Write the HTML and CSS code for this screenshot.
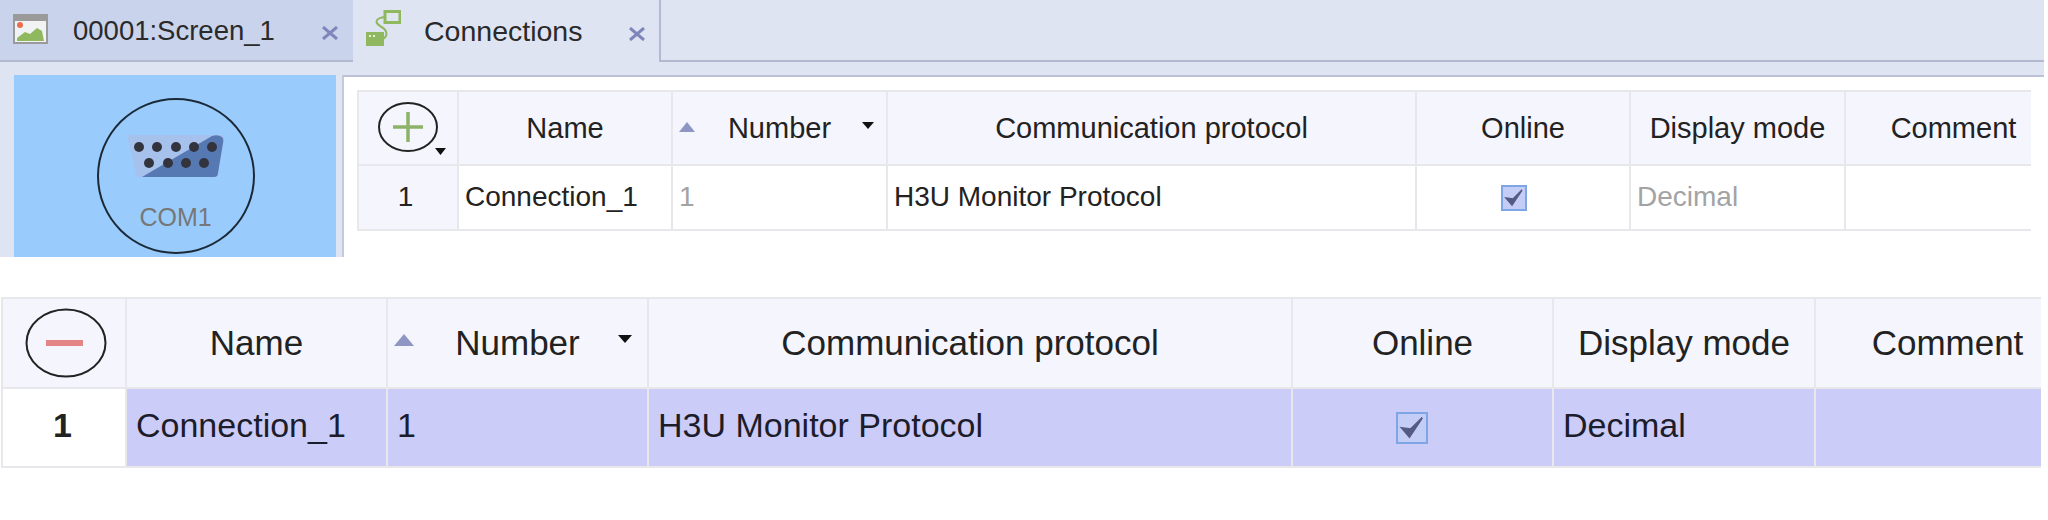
FILE: index.html
```html
<!DOCTYPE html>
<html lang="en">
<head>
<meta charset="utf-8">
<title>Connections</title>
<link rel="stylesheet" href="styles.css">
</head>
<body>
<section class="editor">
  <div class="tabbar">
    <div class="tab tab-inactive">
      <svg class="tab-icon" width="35" height="30" viewBox="0 0 35 30"><rect x="1" y="1" width="33" height="28" fill="#f1f2f4" stroke="#9a9a9a" stroke-width="2"/><rect x="1" y="1" width="33" height="6" fill="#9a9a9a"/><circle cx="7" cy="11" r="3" fill="#ee6b4d"/><path d="M4 27 L4 24 L12 18 L17 20 L24 14 L29 17 L31 27Z" fill="#8fb85f"/></svg>
      <span class="tab-label tab-label-screen">00001:Screen_1</span>
      <span class="tab-close"><svg width="16" height="14" viewBox="0 0 16 14"><path d="M1 1 L15 13 M15 1 L1 13" stroke="#7f86bb" stroke-width="3" fill="none"/></svg></span>
    </div>
    <div class="tab tab-active">
      <svg class="tab-icon" width="35" height="36" viewBox="0 0 35 36"><rect x="19" y="1.5" width="15" height="11" fill="#dfe6f0" stroke="#8fb85f" stroke-width="3"/><path d="M19 7 C10 8 8 12 14 16 C22 20 22 26 17 29" stroke="#8fb85f" stroke-width="2" fill="none"/><rect x="0" y="22" width="18" height="14" fill="#8fb85f"/><rect x="3" y="25" width="2" height="2" fill="#e6efd8"/><rect x="7" y="25" width="2" height="2" fill="#e6efd8"/></svg>
      <span class="tab-label tab-label-conn">Connections</span>
      <span class="tab-close"><svg width="16" height="14" viewBox="0 0 16 14"><path d="M1 1 L15 13 M15 1 L1 13" stroke="#7f86bb" stroke-width="3" fill="none"/></svg></span>
    </div>
    <div class="tab-rest"></div>
  </div>
  <div class="workspace">
    <div class="node-panel">
      <div class="com-node">
        <svg class="connector" width="96" height="42" viewBox="0 0 96 42">
          <path d="M3 0 H93 Q96 0 96 4 L90 38 Q90 42 86 42 H12 Q9 42 8 38 L0 4 Q0 0 3 0Z" fill="#a6c1ec"/>
          <path d="M14 42 L84 1 Q90 -1 94 2 Q96 4 95 8 L90 38 Q90 42 86 42Z" fill="#5679b4"/>
          <g fill="#33333d"><circle cx="11" cy="12" r="5"/><circle cx="29" cy="12" r="5"/><circle cx="48" cy="12" r="5"/><circle cx="66" cy="12" r="5"/><circle cx="84" cy="12" r="5"/><circle cx="21" cy="28" r="5"/><circle cx="40" cy="28" r="5"/><circle cx="58" cy="28" r="5"/><circle cx="76" cy="28" r="5"/></g>
        </svg>
        <span class="com-label">COM1</span>
      </div>
    </div>
    <div class="grid-panel">
      <table class="grid grid-small">
        <colgroup><col class="s1"><col class="s2"><col class="s3"><col class="s4"><col class="s5"><col class="s6"><col class="s7"></colgroup>
        <thead>
          <tr>
            <th class="corner">
              <svg class="add-icon" width="70" height="53" viewBox="0 0 70 53"><ellipse cx="30" cy="25" rx="29" ry="24" fill="none" stroke="#222" stroke-width="2"/><path d="M15 25 H45 M30 10 V40" stroke="#8cb368" stroke-width="3.500" fill="none"/><path d="M57 46 H68 L62.500 53Z" fill="#111"/></svg>
            </th>
            <th>Name</th>
            <th class="sortable">
              <span class="sort-up"></span>Number<span class="sort-down"></span>
            </th>
            <th>Communication protocol</th>
            <th>Online</th>
            <th>Display mode</th>
            <th class="comment">Comment</th>
          </tr>
        </thead>
        <tbody>
          <tr>
            <td class="rownum">1</td>
            <td>Connection_1</td>
            <td class="muted">1</td>
            <td>H3U Monitor Protocol</td>
            <td class="check-cell"><span class="check"><svg width="22" height="22" viewBox="0 0 22 22"><path d="M3 11 L9 18 L19 3 L10 12Z" fill="#555a85" stroke="#555a85" stroke-width="1.500"/></svg></span></td>
            <td class="muted">Decimal</td>
            <td></td>
          </tr>
        </tbody>
      </table>
    </div>
  </div>
</section>
<section class="lower">
  <table class="grid grid-large">
    <colgroup><col class="l1"><col class="l2"><col class="l3"><col class="l4"><col class="l5"><col class="l6"><col class="l7"></colgroup>
    <thead>
      <tr>
        <th class="corner">
          <svg class="remove-icon" width="82" height="70" viewBox="0 0 82 70"><ellipse cx="41" cy="35" rx="39.500" ry="33.500" fill="none" stroke="#222" stroke-width="2"/><rect x="21" y="32" width="37" height="6" fill="#e48585"/></svg>
        </th>
        <th>Name</th>
        <th class="sortable">
          <span class="sort-up"></span>Number<span class="sort-down"></span>
        </th>
        <th>Communication protocol</th>
        <th>Online</th>
        <th>Display mode</th>
        <th class="comment">Comment</th>
      </tr>
    </thead>
    <tbody>
      <tr class="selected">
        <td class="rownum">1</td>
        <td>Connection_1</td>
        <td>1</td>
        <td>H3U Monitor Protocol</td>
        <td class="check-cell"><span class="check"><svg width="28" height="28" viewBox="0 0 22 22"><path d="M3 11 L9 18 L19 3 L10 12Z" fill="#555a85" stroke="#555a85" stroke-width="1.500"/></svg></span></td>
        <td>Decimal</td>
        <td></td>
      </tr>
    </tbody>
  </table>
</section>
</body>
</html>
```

FILE: styles.css
```css
* { box-sizing: border-box; }
html, body { margin: 0; padding: 0; background: #fff; }
body { width: 2048px; height: 520px; overflow: hidden; font-family: "Liberation Sans", Arial, sans-serif; color: #222; }

.editor { width: 2044px; }

.tabbar { display: flex; height: 62px; background: #dee4f1; }
.tab { display: flex; align-items: center; height: 62px; padding-left: 13px; }
.tab-inactive { width: 353px; background: #c9d3ec; border-bottom: 2px solid #b3b9d0; }
.tab-active { width: 306px; background: #dee4f1; }
.tab-rest { flex: 1; border-left: 2px solid #b3b9d0; border-bottom: 2px solid #b3b9d0; }
.tab-icon { flex: none; display: block; }
.tab-label { color: #2a2a2a; white-space: nowrap; padding-top: 1px; }
.tab-label-screen { margin-left: 25px; font-size: 27.500px; }
.tab-label-conn { margin-left: 23px; font-size: 28.500px; }
.tab-close { margin-left: auto; margin-right: 15px; padding-top: 5px; line-height: 0; }
.tab-inactive .tab-icon { margin-top: -3px; }
.tab-active .tab-icon { margin-top: -6px; }
.tab-active .tab-close { margin-right: 14px; }

.workspace { display: flex; height: 195px; background: #dee4f1; padding-top: 13px; }

.node-panel { width: 322px; margin-left: 14px; background: #99ccfd; display: flex; justify-content: center; padding-top: 23px; }
.com-node { width: 158px; height: 156px; flex: none; border: 2px solid #1c2a38; border-radius: 50%; display: flex; flex-direction: column; align-items: center; padding-top: 35px; margin-left: 1px; }
.connector { display: block; flex: none; }
.com-label { font-size: 25px; line-height: 30px; color: #777; margin-top: 25px; }

.grid-panel { flex: 1; margin-left: 6px; background: #fff; border-left: 2px solid #c5c9da; border-top: 2px solid #bcc1d6; padding: 13px 0 0 13px; }

.grid { border-collapse: separate; border-spacing: 0; table-layout: fixed; border-top: 2px solid #e8e8ec; border-left: 2px solid #e8e8ec; }
.grid th, .grid td { padding: 0; border-right: 2px solid #e8e8ec; border-bottom: 2px solid #e8e8ec; font-weight: normal; white-space: nowrap; overflow: hidden; }
.grid th { background: #f4f5fd; text-align: center; }
.grid th:last-child, .grid td:last-child { border-right: 0; }
.grid td { text-align: left; }
.grid .corner, .grid .rownum, .grid .check-cell { text-align: center; }
.grid .rownum { background: #f4f5fd; }
.grid .muted { color: #a3a3a3; }
.sortable { position: relative; }
.sort-up, .sort-down { position: absolute; width: 0; height: 0; border-style: solid; border-color: transparent; }

.grid-small { width: 1674px; font-size: 28px; }
.grid-small th { font-size: 29px; height: 74px; }
.grid-small td { height: 65px; padding-left: 6px; padding-bottom: 2px; }
.grid-small td.rownum, .grid-small td.check-cell { padding-left: 0; }
.grid-small td.rownum { padding-right: 5px; }
.grid-small .comment { padding-left: 30px; }
.grid-small .sort-up { left: 6px; top: 30px; border-width: 0 8px 10px; border-bottom-color: #8e96c4; }
.grid-small .sort-down { left: 189px; top: 30px; border-width: 7px 6px 0; border-top-color: #111; }
.s1 { width: 100px; } .s2 { width: 214px; } .s3 { width: 215px; } .s4 { width: 529px; } .s5 { width: 214px; } .s6 { width: 215px; } .s7 { width: 185px; }
.add-icon { display: block; margin: 0 0 0 19px; }

.lower { margin-top: 40px; padding-left: 1px; }
.grid-large { width: 2040px; font-size: 34px; }
.grid-large th { font-size: 35px; height: 90px; }
.grid-large td { height: 79px; padding-left: 9px; padding-bottom: 4px; }
.grid-large td.rownum, .grid-large td.check-cell { padding-left: 0; }
.grid-large .rownum { background: #fff; font-weight: bold; padding-right: 3px; }
.grid-large .comment { padding-left: 38px; }
.grid-large .sort-up { left: 6px; top: 35px; border-width: 0 10px 12px; border-bottom-color: #8e96c4; }
.grid-large .sort-down { left: 230px; top: 36px; border-width: 8px 7.500px 0; border-top-color: #111; }
.selected td:not(.rownum) { background: #ccccf9; color: #1c1c2a; }
.l1 { width: 124px; } .l2 { width: 261px; } .l3 { width: 261px; } .l4 { width: 644px; } .l5 { width: 261px; } .l6 { width: 262px; } .l7 { width: 225px; }
.remove-icon { display: block; margin: 0 0 0 22px; }

.check { display: inline-flex; align-items: center; justify-content: center; vertical-align: middle; background: #c3cdf5; border: 2px solid #7ea6e6; }
.grid-small .check { width: 26px; height: 26px; margin-right: 18px; }
.grid-large .check { width: 32px; height: 32px; margin-right: 22px; }
```
